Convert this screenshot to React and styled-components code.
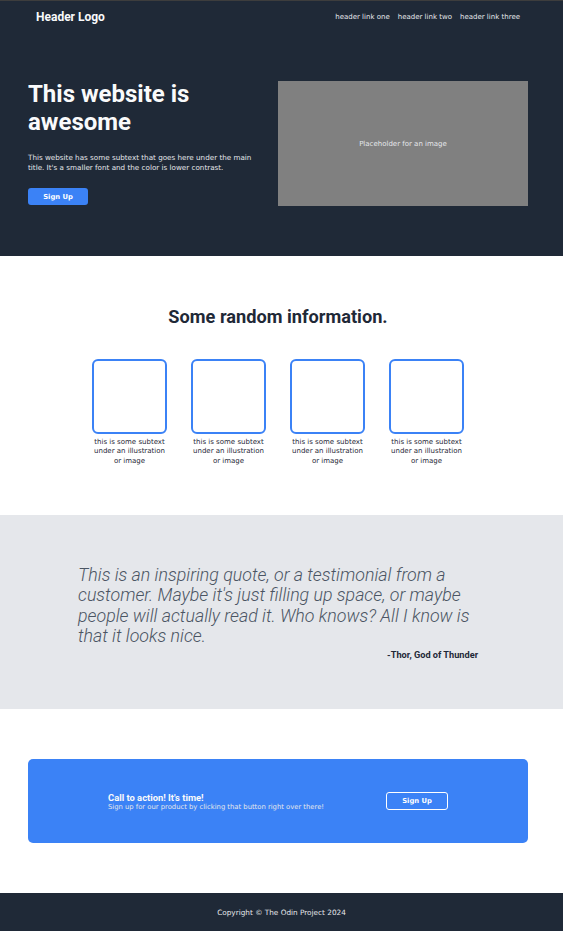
import React from 'react'
import styled, { createGlobalStyle } from 'styled-components'

const GlobalStyle = createGlobalStyle`
  * { box-sizing: border-box; }
  body {
    margin: 0;
    font-family: "DejaVu Sans", Verdana, sans-serif;
    background: #fff;
  }
  h1, h2, p { margin: 0; }
`

const dark = '#1f2937'
const blue = '#3b82f6'

const Header = styled.header`
  background: ${dark};
  border-top: 1px solid #3d3d3d;
  height: 256px;
`

const Nav = styled.nav`
  display: flex;
  align-items: center;
  justify-content: space-between;
  height: 31px;
  padding: 0 43px 0 36px;
`

const Logo = styled.div`
  font-family: Roboto, sans-serif;
  font-weight: 700;
  font-size: 12px;
  color: #f9fafb;
`

const Links = styled.ul`
  display: flex;
  gap: 8px;
  list-style: none;
  margin: 0;
  padding: 0;
`

const NavLink = styled.li`
  font-size: 7px;
  color: #e5e7eb;
`

const Hero = styled.section`
  display: flex;
  align-items: flex-start;
  justify-content: space-between;
  width: 500px;
  margin: 48px 0 0 28px;
`

const HeroText = styled.div`
  width: 240px;
`

const Title = styled.h1`
  font-family: Roboto, sans-serif;
  font-weight: 700;
  font-size: 24px;
  line-height: 28px;
  color: #f9fafb;
`

const Subtext = styled.p`
  margin-top: 17px;
  font-size: 7.2px;
  line-height: 9.5px;
  color: #e5e7eb;
`

const Button = styled.button`
  font-family: "DejaVu Sans", sans-serif;
  font-weight: 700;
  font-size: 6.8px;
  color: #fff;
  background: ${p => (p.$outline ? 'transparent' : blue)};
  border: ${p => (p.$outline ? '1px solid #fff' : 'none')};
  border-radius: 3px;
  width: ${p => p.$width};
  height: ${p => p.$height};
  padding: 0;
  cursor: pointer;
`

const HeroButton = styled(Button)`
  margin-top: 16px;
`

const ImageBox = styled.div`
  width: 250px;
  height: 125px;
  margin-top: 1px;
  background: #808080;
  display: flex;
  align-items: center;
  justify-content: center;
  font-size: 7px;
  color: #e5e7eb;
`

const Info = styled.section`
  height: 259px;
  padding: 50px 7px 0 0;
`

const SectionTitle = styled.h2`
  text-align: center;
  font-family: Roboto, sans-serif;
  font-weight: 700;
  font-size: 18.2px;
  color: ${dark};
`

const Cards = styled.div`
  display: flex;
  justify-content: center;
  gap: 24px;
  margin-top: 32px;
`

const Card = styled.div`
  width: 75px;
  display: flex;
  flex-direction: column;
  align-items: center;
`

const Illustration = styled.div`
  width: 75px;
  height: 75px;
  border: 2px solid ${blue};
  border-radius: 6px;
`

const CardText = styled.p`
  margin-top: 4px;
  text-align: center;
  font-size: 7px;
  line-height: 9.3px;
  color: ${dark};
`

const QuoteSection = styled.section`
  background: #e5e7eb;
  height: 194px;
  padding: 50px 0 0 78px;
`

const QuoteBox = styled.div`
  width: 400px;
`

const Quote = styled.p`
  font-family: Roboto, sans-serif;
  font-weight: 300;
  font-style: italic;
  font-size: 17.8px;
  line-height: 20.3px;
  color: #4b5563;
`

const Author = styled.p`
  text-align: right;
  margin-top: 3px;
  font-family: Roboto, sans-serif;
  font-weight: 700;
  font-size: 9.2px;
  color: ${dark};
`

const CtaSection = styled.section`
  height: 184px;
  padding: 50px 35px 0 28px;
`

const CtaBox = styled.div`
  height: 84px;
  background: ${blue};
  border-radius: 5px;
  display: flex;
  align-items: center;
  padding: 0 80px 0 80px;
  justify-content: space-between;
`

const CtaTitle = styled.div`
  font-family: Roboto, sans-serif;
  font-weight: 700;
  font-size: 9.4px;
  color: #f9fafb;
`

const CtaSub = styled.div`
  font-size: 6.8px;
  color: #e5e7eb;
`

const Footer = styled.footer`
  background: ${dark};
  height: 38px;
  display: flex;
  align-items: center;
  justify-content: center;
  font-size: 7.3px;
  color: #e5e7eb;
`

const cards = [1, 2, 3, 4]

export default function App() {
  return (
    <>
      <GlobalStyle />
      <Header>
        <Nav>
          <Logo>Header Logo</Logo>
          <Links>
            <NavLink>header link one</NavLink>
            <NavLink>header link two</NavLink>
            <NavLink>header link three</NavLink>
          </Links>
        </Nav>
        <Hero>
          <HeroText>
            <Title>This website is awesome</Title>
            <Subtext>
              This website has some subtext that goes here under the main
              title. It's a smaller font and the color is lower contrast.
            </Subtext>
            <HeroButton $width="60px" $height="17px">Sign Up</HeroButton>
          </HeroText>
          <ImageBox>Placeholder for an image</ImageBox>
        </Hero>
      </Header>
      <Info>
        <SectionTitle>Some random information.</SectionTitle>
        <Cards>
          {cards.map(c => (
            <Card key={c}>
              <Illustration />
              <CardText>this is some subtext under an illustration or image</CardText>
            </Card>
          ))}
        </Cards>
      </Info>
      <QuoteSection>
        <QuoteBox>
          <Quote>
            This is an inspiring quote, or a testimonial from a customer. Maybe
            it's just filling up space, or maybe people will actually read it.
            Who knows? All I know is that it looks nice.
          </Quote>
          <Author>-Thor, God of Thunder</Author>
        </QuoteBox>
      </QuoteSection>
      <CtaSection>
        <CtaBox>
          <div>
            <CtaTitle>Call to action! It's time!</CtaTitle>
            <CtaSub>Sign up for our product by clicking that button right over there!</CtaSub>
          </div>
          <Button $outline $width="62px" $height="18px">Sign Up</Button>
        </CtaBox>
      </CtaSection>
      <Footer>Copyright © The Odin Project 2024</Footer>
    </>
  )
}
